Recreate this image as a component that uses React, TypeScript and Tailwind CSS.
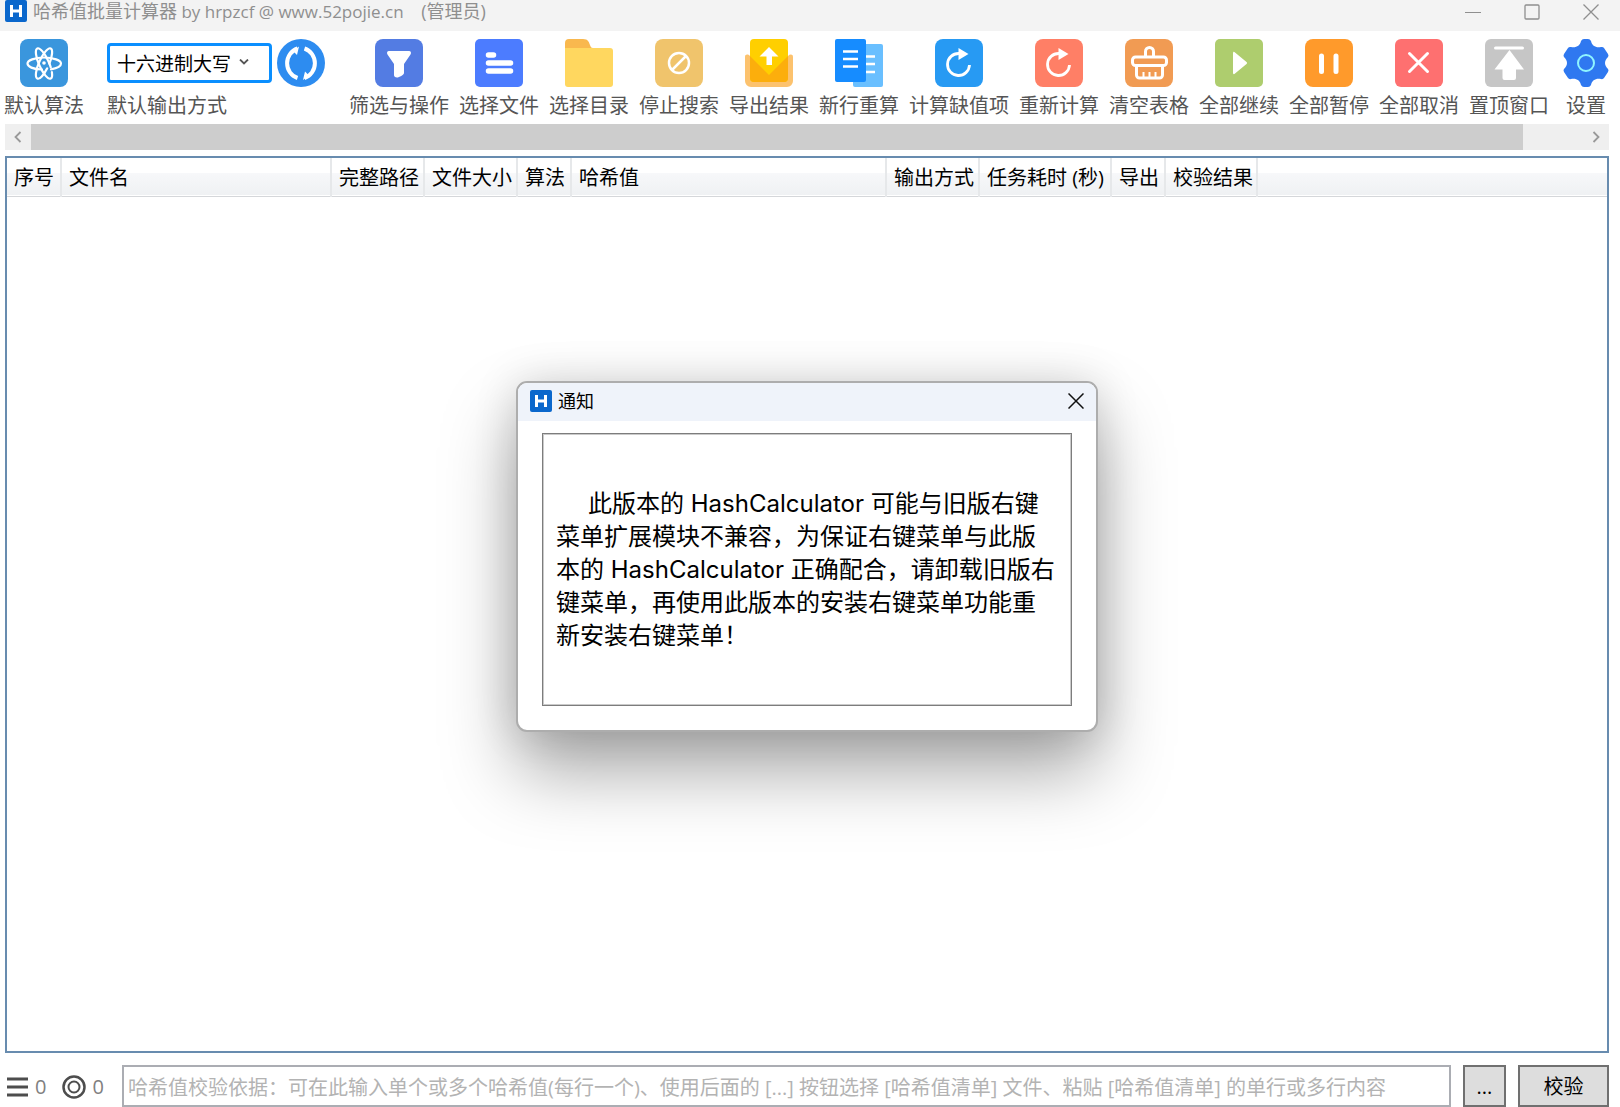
import { ReactNode } from "react";

const sans = "font-['Open_Sans','Noto_Sans_CJK_SC',sans-serif]";

function AppLogo() {
  return (
    <svg viewBox="0 0 22 22" className="size-[22px] shrink-0" aria-hidden="true">
      <rect width="22" height="22" rx="2" fill="#0a67cc" />
      <path d="M6.500 5v12M15.500 5v12M6.500 11h9" stroke="#fff" strokeWidth="3" fill="none" />
    </svg>
  );
}

function Tile({ color, radius = 8, children }: { color: string; radius?: number; children?: ReactNode }) {
  return (
    <svg viewBox="0 0 48 48" className="size-12" aria-hidden="true">
      <rect width="48" height="48" rx={radius} fill={color} />
      {children}
    </svg>
  );
}

function RedoMark() {
  return (
    <>
      <path d="M34.500 26a11 11 0 1 1-10.500-11.500" stroke="#fff" strokeWidth="2.800" fill="none" />
      <path d="M23.500 9l10 6-10 6z" fill="#fff" />
    </>
  );
}

const icons = {
  atom: (
    <Tile color="#3a96dd">
      <g stroke="#fff" strokeWidth="2.200" fill="none" strokeLinecap="round">
        <path d="M22 30.500C13 30.500 7.500 27.500 7.500 24.500s7-6 16.500-6 17 3 17 6-5 5-10 5.800" />
        <ellipse cx="24" cy="24.500" rx="16.500" ry="5" transform="rotate(66 24 24.5)" strokeDasharray="60 5" />
        <ellipse cx="24" cy="24.500" rx="16.500" ry="5" transform="rotate(114 24 24.5)" strokeDasharray="52 5" />
      </g>
      <circle cx="24" cy="24" r="1.800" fill="#fff" />
    </Tile>
  ),
  filter: (
    <Tile color="#537ce3">
      <path d="M14 12h20c2 0 2.500 2 1.500 3.500L29 25v9c0 2-5 4.500-7 4.500-2 0-3-1-3-2.500V25l-6.500-9.500C11.500 14 12 12 14 12z" fill="#fff" />
    </Tile>
  ),
  file: (
    <Tile color="#4c7cff" radius={5}>
      <path d="M13.500 16h5M13.500 24h22M13.500 32h22" stroke="#fff" strokeWidth="5.500" strokeLinecap="round" />
    </Tile>
  ),
  folder: (
    <svg viewBox="0 0 48 48" className="size-12" aria-hidden="true">
      <path d="M0 12V4a4 4 0 0 1 4-4h14c5 0 6 3 7 6s2 3 4 3v5H0z" fill="#f9b84e" />
      <path d="M0 9h45a3 3 0 0 1 3 3v33a3 3 0 0 1-3 3H3a3 3 0 0 1-3-3z" fill="#ffd75f" />
    </svg>
  ),
  stop: (
    <Tile color="#f0c46c">
      <g stroke="#fff" strokeWidth="2.500" fill="none">
        <circle cx="24" cy="24" r="10" />
        <path d="M17 31l14-14" />
      </g>
    </Tile>
  ),
  exportResult: (
    <svg viewBox="0 0 48 48" className="size-12" aria-hidden="true">
      <path d="M0 18c0-3 3-3 5-1h38c2-2 5-2 5 1v24a6 6 0 0 1-6 6H6a6 6 0 0 1-6-6z" fill="#fcc26e" />
      <rect x="5" width="38" height="43" rx="4" fill="#ffcf00" />
      <path d="M5 17l19 19 19-19v22a4 4 0 0 1-4 4H9a4 4 0 0 1-4-4z" fill="#fcae0c" />
      <path d="M24 8l9.500 9.500H27V26h-5.500v-8.500h-7z" fill="#fff" />
    </svg>
  ),
  newRow: (
    <svg viewBox="0 0 48 48" className="size-12" aria-hidden="true">
      <rect x="18" y="5" width="30" height="43" rx="2" fill="#69bfff" />
      <rect width="31" height="43" rx="2" fill="#168cff" />
      <path d="M8 12.500h15M8 20h15M8 27.500h15M31 17.500h9M31 25h9M31 33h9" stroke="#fff" strokeWidth="2.500" />
    </svg>
  ),
  missing: (
    <Tile color="#279af3"><RedoMark /></Tile>
  ),
  recalc: (
    <Tile color="#ff7f66"><RedoMark /></Tile>
  ),
  clear: (
    <Tile color="#f19b53">
      <g stroke="#fff" strokeWidth="3" fill="none" strokeLinejoin="round">
        <path d="M20.500 18v-5.500a4 4 0 0 1 8 0V18" />
        <rect x="7.500" y="18" width="34" height="8.500" rx="3" />
        <path d="M11.500 27v9a3 3 0 0 0 3 3h20a3 3 0 0 0 3-3v-9" />
        <path d="M18.500 33v5M24.500 33v5M30.500 33v5" strokeWidth="2" />
      </g>
    </Tile>
  ),
  resume: (
    <Tile color="#aecd6e" radius={5}>
      <path d="M18 14.500c0-2 1-2 2-1L31.500 23c.7.700.700 1.300 0 2L20 34.500c-1 1-2 1-2-1z" fill="#fff" />
    </Tile>
  ),
  pause: (
    <Tile color="#ff9a2b">
      <path d="M16.500 17v15.500M31 17v15.500" stroke="#fff" strokeWidth="5" strokeLinecap="round" />
    </Tile>
  ),
  cancel: (
    <Tile color="#fe7070" radius={6}>
      <path d="M14.500 14.500l18 18M32.500 14.500l-18 18" stroke="#fff" strokeWidth="3" strokeLinecap="round" />
    </Tile>
  ),
  pin: (
    <Tile color="#c6c6c6" radius={6}>
      <path d="M10.500 9h27" stroke="#fff" strokeWidth="3" strokeLinecap="round" />
      <path d="M24.500 11L39 30.500h-8V39q0 2-2 2h-9.500q-2 0-2-2v-8.500H9.500z" fill="#fff" />
    </Tile>
  ),
  gear: (
    <svg viewBox="0 0 48 48" className="size-12" aria-hidden="true">
      <path d="M19 2q1-2 3-2h4q2 0 3 2c1 5 5 7 10 6q2-.5 3 1l4 6q1 2 0 3c-4 4-4 8 0 12q1 1 0 3l-4 6q-1 1.500-3 1c-5-1-9 1-10 6q-1 2-3 2h-4q-2 0-3-2c-1-5-5-7-10-6q-2 .5-3-1l-4-6q-1-2 0-3c4-4 4-8 0-12q-1-1 0-3l4-6q1-1.500 3-1c5 1 9-1 10-6z" fill="#2f78f0" />
      <circle cx="24" cy="24" r="8" stroke="#8ff5ff" strokeWidth="2" fill="none" />
    </svg>
  ),
};

const tools = [
  { label: "筛选与操作", icon: icons.filter, width: "w-25" },
  { label: "选择文件", icon: icons.file, width: "w-20" },
  { label: "选择目录", icon: icons.folder, width: "w-20" },
  { label: "停止搜索", icon: icons.stop, width: "w-20" },
  { label: "导出结果", icon: icons.exportResult, width: "w-20" },
  { label: "新行重算", icon: icons.newRow, width: "w-20" },
  { label: "计算缺值项", icon: icons.missing, width: "w-25" },
  { label: "重新计算", icon: icons.recalc, width: "w-20" },
  { label: "清空表格", icon: icons.clear, width: "w-20" },
  { label: "全部继续", icon: icons.resume, width: "w-20" },
  { label: "全部暂停", icon: icons.pause, width: "w-20" },
  { label: "全部取消", icon: icons.cancel, width: "w-20" },
  { label: "置顶窗口", icon: icons.pin, width: "w-20" },
  { label: "设置", icon: icons.gear, width: "w-[54px]" },
];

const columns = [
  { title: "序号", width: "w-[54px]" },
  { title: "文件名", width: "w-[270px]" },
  { title: "完整路径", width: "w-[93px]" },
  { title: "文件大小", width: "w-[93px]" },
  { title: "算法", width: "w-[54px]" },
  { title: "哈希值", width: "w-[315px]" },
  { title: "输出方式", width: "w-[93px]" },
  { title: "任务耗时 (秒)", width: "w-[132px]" },
  { title: "导出", width: "w-[54px]" },
  { title: "校验结果", width: "w-[92px]" },
];

function TitleBar() {
  return (
    <header className="flex h-[31px] shrink-0 items-start bg-[#f3f3f3] pl-[5px] text-[18px] leading-[22px] text-[#8f8f8f]">
      <AppLogo />
      <h1 className="ml-1.5 whitespace-pre">
        哈希值批量计算器<span className="text-[17px]"> by hrpzcf @ www.52pojie.cn    </span>(管理员)
      </h1>
      <div className="ml-auto flex">
        <button type="button" aria-label="最小化" className="flex h-[23px] w-[59px] items-center justify-center">
          <svg viewBox="0 0 16 16" className="size-4"><path d="M0 8.500h16" stroke="#8f8f8f" /></svg>
        </button>
        <button type="button" aria-label="最大化" className="flex h-[23px] w-[59px] items-center justify-center">
          <svg viewBox="0 0 16 16" className="size-4"><rect x="1" y="1" width="14" height="14" rx="1" stroke="#8f8f8f" strokeWidth="1.300" fill="none" /></svg>
        </button>
        <button type="button" aria-label="关闭" className="flex h-[23px] w-[59px] items-center justify-center">
          <svg viewBox="0 0 16 16" className="size-4"><path d="M.5.500l15 15M15.500.500l-15 15" stroke="#8f8f8f" strokeWidth="1.300" /></svg>
        </button>
      </div>
    </header>
  );
}

function ToolButton({ label, icon, width }: { label: string; icon: ReactNode; width: string }) {
  return (
    <button type="button" className={`flex shrink-0 flex-col items-center gap-[5px] whitespace-nowrap ${width}`}>
      {icon}
      <span>{label}</span>
    </button>
  );
}

function Toolbar() {
  return (
    <div className="flex shrink-0 overflow-hidden pt-2 pl-1 text-[20px] leading-7 text-[#555]">
      <ToolButton label="默认算法" icon={icons.atom} width="w-20" />
      <div className="ml-[23px] flex w-[218px] shrink-0 flex-col gap-[5px]">
        <div className="flex h-12 items-center gap-[5px]">
          <div className="relative">
            <select
              id="output-format"
              className="block h-10 w-[165px] appearance-none rounded-[4px] border-3 border-[#0a8fff] bg-white pt-0.5 pl-[7px] text-[19px] text-black"
            >
              <option>十六进制大写</option>
            </select>
            <svg viewBox="0 0 10 6" className="pointer-events-none absolute top-[16px] left-[132px] h-1.5 w-2.5" aria-hidden="true">
              <path d="M1 .5l4 4 4-4" stroke="#555" strokeWidth="1.800" fill="none" />
            </svg>
          </div>
          <button type="button" aria-label="切换输出方式">
            <svg viewBox="0 0 48 48" className="size-12">
              <circle cx="24" cy="24" r="24" fill="#2d8cf0" />
              <g stroke="#fff" strokeWidth="4" fill="none">
                <path d="M20.500 9.500A15 15.500 0 0 0 20.500 39" />
                <path d="M27.500 9.500A15 15.500 0 0 1 27.500 39" />
              </g>
              <path d="M22 7.500l-2 8.500-4-4zM26 41l2-8.500 4 4z" fill="#fff" />
            </svg>
          </button>
        </div>
        <label htmlFor="output-format">默认输出方式</label>
      </div>
      <div className="ml-6 flex gap-2.5">
        {tools.map((tool) => (
          <ToolButton key={tool.label} {...tool} />
        ))}
      </div>
    </div>
  );
}

function ScrollStrip() {
  return (
    <div className="mt-1 mr-[11px] ml-[5px] flex h-[26px] shrink-0 bg-[#efefef]">
      <button type="button" aria-label="向左滚动" className="flex w-[26px] items-center justify-center">
        <svg viewBox="0 0 8 12" className="h-3 w-2"><path d="M6.500 1L1.500 6l5 5" stroke="#999" strokeWidth="1.800" fill="none" /></svg>
      </button>
      <div className="mr-15 flex-1 bg-[#cdcdcd]" />
      <button type="button" aria-label="向右滚动" className="flex w-[26px] items-center justify-center">
        <svg viewBox="0 0 8 12" className="h-3 w-2"><path d="M1.500 1l5 5-5 5" stroke="#999" strokeWidth="1.800" fill="none" /></svg>
      </button>
    </div>
  );
}

function ResultTable() {
  return (
    <main className="mt-1.5 mr-[11px] ml-[5px] flex-1 border-2 border-[#688caf] bg-white">
      <table className="w-full table-fixed border-collapse text-[20px] leading-7 text-black">
        <thead>
          <tr className="h-[38px] border-b border-[#d5d7da] bg-linear-to-b from-white from-40% via-[#f7f8fa] via-40% to-[#eff1f3]">
            {columns.map((col) => (
              <th key={col.title} className={`border-r-2 border-[#e6e8ea] p-0 pt-0.5 pl-[7px] text-left font-normal whitespace-nowrap ${col.width}`}>
                {col.title}
              </th>
            ))}
            <th aria-hidden="true" />
          </tr>
        </thead>
        <tbody />
      </table>
    </main>
  );
}

function StatusBar() {
  return (
    <footer className="flex h-[54px] shrink-0 items-start gap-3 pt-3 pr-[11px] pl-[7px] text-[20px]">
      <div className="flex h-11 w-[103px] shrink-0 items-center text-[#808080]">
        <svg viewBox="0 0 21 20" className="h-5 w-[21px]" aria-hidden="true">
          <path d="M0 2h21M0 10h21M0 18h21" stroke="#4d4d4d" strokeWidth="3" />
        </svg>
        <span className="ml-[7px]">0</span>
        <svg viewBox="0 0 24 24" className="ml-4 size-6" aria-hidden="true">
          <circle cx="12" cy="12" r="10.500" stroke="#4d4d4d" strokeWidth="2.500" fill="none" />
          <circle cx="12" cy="12" r="5.500" stroke="#4d4d4d" strokeWidth="2" fill="none" />
        </svg>
        <span className="ml-1.5">0</span>
      </div>
      <input
        type="text"
        aria-label="哈希值校验依据"
        placeholder="哈希值校验依据：可在此输入单个或多个哈希值(每行一个)、使用后面的 [...] 按钮选择 [哈希值清单] 文件、粘贴 [哈希值清单] 的单行或多行内容"
        className="h-[42px] min-w-0 flex-1 border-2 border-[#abadb3] bg-white px-1 pt-0.5 placeholder:text-[#b3b3b3]"
      />
      <button type="button" className="h-[42px] w-[43px] border-2 border-[#707070] bg-[#ddd] pt-0.5 text-black">...</button>
      <button type="button" className="h-[42px] w-[91px] border-2 border-[#707070] bg-[#ddd] pt-0.5 text-black">校验</button>
    </footer>
  );
}

function NoticeDialog() {
  return (
    <div
      role="dialog"
      aria-labelledby="notice-title"
      className="absolute top-[381px] left-1/2 ml-[-294px] w-[582px] overflow-hidden rounded-[11px] border-2 border-[#adadad] bg-white shadow-[0_0_44px_rgba(0,0,0,0.14),0_40px_72px_rgba(0,0,0,0.34)]"
    >
      <div className="flex h-[38px] items-center bg-[#eff3fa] px-3 pb-0.5">
        <AppLogo />
        <h2 id="notice-title" className="ml-1.5 text-[18px] leading-6 text-black">通知</h2>
        <button type="button" aria-label="关闭" className="ml-auto">
          <svg viewBox="0 0 16 16" className="size-4"><path d="M.5.500l15 15M15.500.500l-15 15" stroke="#111" strokeWidth="1.500" /></svg>
        </button>
      </div>
      <div className="mx-6 mt-3 mb-6 flex h-[273px] items-center border border-[#7d7d7d] px-[13px] inset-ring inset-ring-[#cacaca]">
        <p className="indent-8 font-['Inter','Noto_Sans_CJK_SC',sans-serif] text-2xl leading-[33px] text-black">
          此版本的 HashCalculator 可能与旧版右键菜单扩展模块不兼容，为保证右键菜单与此版本的 HashCalculator 正确配合，请卸载旧版右键菜单，再使用此版本的安装右键菜单功能重新安装右键菜单！
        </p>
      </div>
    </div>
  );
}

export default function App() {
  return (
    <div lang="zh-CN" className={`relative flex h-screen flex-col overflow-hidden bg-white ${sans}`}>
      <TitleBar />
      <Toolbar />
      <ScrollStrip />
      <ResultTable />
      <StatusBar />
      <NoticeDialog />
    </div>
  );
}
